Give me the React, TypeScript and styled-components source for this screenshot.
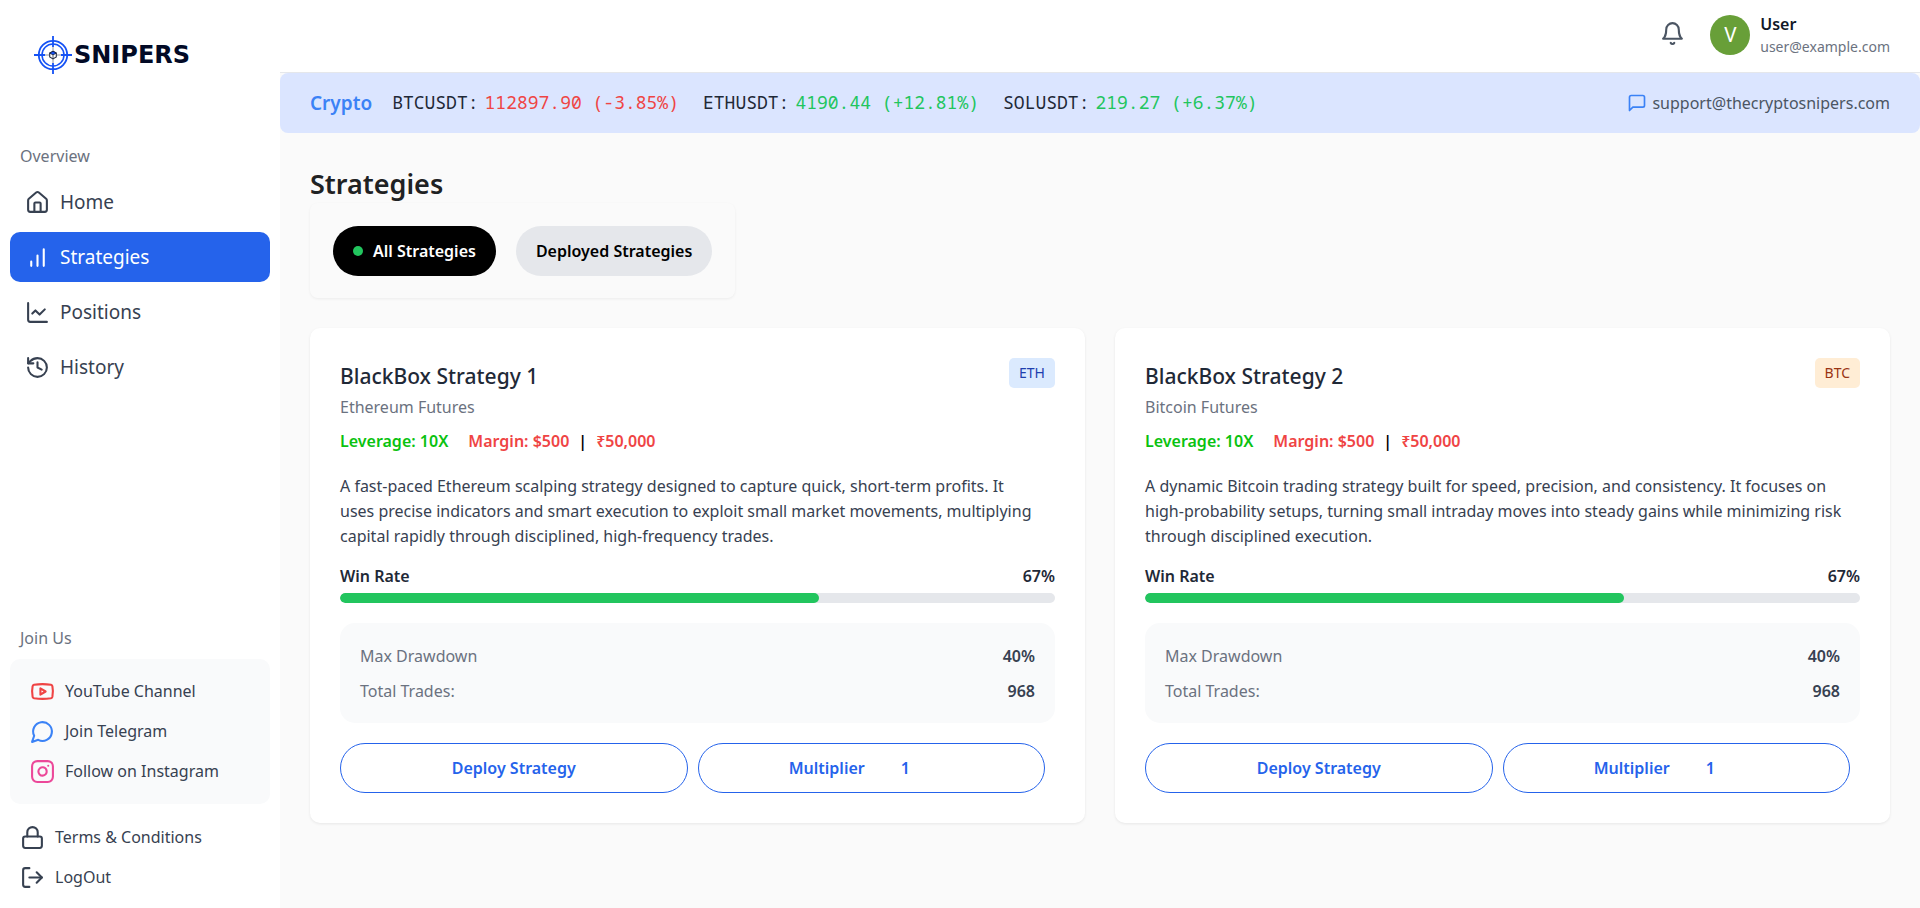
import React, { useState } from "react";
import styled, { createGlobalStyle, css } from "styled-components";
import { ChartLine, History, House, Instagram, Lock, LogOut, Youtube } from "lucide-react";

const GlobalStyle = createGlobalStyle`
  *, *::before, *::after { box-sizing: border-box; }
  body {
    margin: 0;
    background: #fafafa;
    color: #1f2937;
    font: 400 16px/25px "Noto Sans", "Open Sans", sans-serif;
  }
  h1, h2, p, ul, dl, dd { margin: 0; padding: 0; }
  ul { list-style: none; }
  a { color: inherit; text-decoration: none; }
  button, select { font: inherit; cursor: pointer; }
  svg { display: block; flex: none; }
`;

const Shell = styled.div`
  display: grid;
  grid-template-columns: 280px minmax(0, 1fr);
  min-height: 100vh;
`;

const Sidebar = styled.aside`
  display: flex;
  flex-direction: column;
  justify-content: space-between;
  background: #fff;
  padding: 33px 10px 18px;
`;

const Brand = styled.a`
  display: flex;
  align-items: center;
  padding-left: 22px;
  color: #020a26;
  font: 700 24px/44px "DejaVu Sans", "Noto Sans", sans-serif;
`;

const SectionLabel = styled.p<{ $spaced?: boolean }>`
  padding-left: 10px;
  color: #6b7280;
  margin: ${(p) => (p.$spaced ? "67px 0 8px" : "0 0 8px")};
`;

const NavList = styled.ul`
  display: grid;
  gap: 5px;
`;

const NavLink = styled.a<{ $active?: boolean }>`
  display: flex;
  align-items: center;
  gap: 10px;
  height: 50px;
  padding: 0 15px;
  border-radius: 10px;
  font-size: 19px;
  color: ${(p) => (p.$active ? "#fff" : "#374151")};
  background: ${(p) => (p.$active ? "#2563eb" : "transparent")};
`;

const SocialList = styled.ul`
  display: grid;
  gap: 15px;
  padding: 20px;
  margin-bottom: 21px;
  border-radius: 10px;
  background: #f9fafb;
`;

const FooterList = styled.ul`
  display: grid;
  gap: 15px;
  padding-left: 10px;
`;

const IconLink = styled.a<{ $tint?: string }>`
  display: flex;
  align-items: center;
  gap: 10px;
  color: #374151;
  svg { color: ${(p) => p.$tint ?? "inherit"}; }
`;

const Content = styled.div`
  display: flex;
  flex-direction: column;
`;

const TopBar = styled.header`
  display: flex;
  align-items: center;
  justify-content: flex-end;
  gap: 25px;
  height: 73px;
  padding: 0 30px 2px;
  background: #fff;
  border-bottom: 1px solid #e5e7eb;
`;

const BellButton = styled.button`
  border: 0;
  padding: 0 0 3px;
  background: none;
  color: #4b5563;
`;

const Account = styled.div`
  display: flex;
  align-items: center;
  gap: 10px;
`;

const Avatar = styled.span`
  display: grid;
  place-items: center;
  width: 40px;
  height: 40px;
  border-radius: 50%;
  background: #689f38;
  color: #fff;
  font: 400 20px/40px Roboto, sans-serif;
`;

const AccountName = styled.p`
  color: #111827;
  font-weight: 600;
  line-height: 23px;
`;

const AccountEmail = styled.p`
  color: #6b7280;
  font-size: 14px;
  line-height: 21px;
`;

const TickerBar = styled.section`
  display: flex;
  align-items: center;
  justify-content: space-between;
  height: 60px;
  padding: 0 30px;
  border-radius: 8px;
  background: #dbe5ff;
`;

const Quotes = styled.div`
  display: flex;
  align-items: center;
  gap: 24px;
`;

const Market = styled.span`
  margin-right: -4px;
  color: #3b82f6;
  font-size: 19px;
  font-weight: 600;
`;

const Quote = styled.span<{ $up: boolean }>`
  display: flex;
  gap: 6px;
  padding-bottom: 2px;
  color: #1f2937;
  font: 400 18px/25px "Noto Sans Mono", "DejaVu Sans Mono", monospace;
  b { font-weight: 400; color: ${(p) => (p.$up ? "#22c55e" : "#ef4444")}; }
`;

const Support = styled.a`
  display: flex;
  align-items: center;
  gap: 5px;
  color: #4b5563;
  svg { color: #3b82f6; }
`;

const Main = styled.main`
  padding: 32px 30px 30px;
`;

const PageTitle = styled.h1`
  color: #1f2223;
  font-size: 27px;
  font-weight: 600;
  line-height: 38px;
`;

const Filters = styled.div`
  display: flex;
  gap: 20px;
  width: fit-content;
  padding: 23px 23px 22px;
  margin-bottom: 30px;
  border-radius: 8px;
  box-shadow: 0 1px 3px rgba(0, 0, 0, 0.06);
`;

const pill = css`
  display: flex;
  align-items: center;
  justify-content: center;
  height: 50px;
  padding: 0;
  border-radius: 25px;
  font-weight: 600;
`;

const FilterButton = styled.button<{ $active: boolean }>`
  ${pill}
  gap: 10px;
  padding: 0 20px;
  border: 0;
  background: ${(p) => (p.$active ? "#000" : "#e5e7eb")};
  color: ${(p) => (p.$active ? "#fff" : "#000")};
`;

const ActiveDot = styled.span`
  width: 10px;
  height: 10px;
  border-radius: 50%;
  background: #22c55e;
`;

const CardGrid = styled.div`
  display: grid;
  grid-template-columns: repeat(auto-fit, minmax(480px, 1fr));
  gap: 30px;
`;

const Card = styled.article`
  padding: 30px;
  border-radius: 10px;
  background: #fff;
  box-shadow: 0 1px 3px rgba(0, 0, 0, 0.08);
`;

const CardHead = styled.header`
  display: flex;
  justify-content: space-between;
  align-items: flex-start;
  margin-bottom: 9px;
`;

const CardTitle = styled.h2`
  font-size: 21px;
  font-weight: 500;
  line-height: 37px;
`;

const MarketName = styled.p`
  color: #6b7280;
`;

const Badge = styled.span<{ $tone: "blue" | "orange" }>`
  padding: 0 10px;
  border-radius: 5px;
  font-size: 14px;
  line-height: 30px;
  color: ${(p) => (p.$tone === "blue" ? "#1e40af" : "#9a3412")};
  background: ${(p) => (p.$tone === "blue" ? "#dbeafe" : "#ffedd5")};
`;

const Terms = styled.p`
  display: flex;
  font-weight: 600;
  color: #000;
`;

const Leverage = styled.span`
  margin-right: 20px;
  color: #0ac210;
`;

const Amount = styled.span`
  color: #ef4444;
`;

const Divider = styled.span`
  margin: 0 9px;
`;

const Description = styled.p`
  margin: 20px 0 15px;
  color: #374151;
`;

const WinRate = styled.div`
  display: flex;
  justify-content: space-between;
  margin-bottom: 4px;
  font-weight: 600;
`;

const Track = styled.div`
  height: 10px;
  border-radius: 5px;
  background: #e5e7eb;
  overflow: hidden;
`;

const Fill = styled.div`
  height: 100%;
  border-radius: 5px;
  background: #22c55e;
`;

const Stats = styled.dl`
  display: grid;
  gap: 10px;
  margin: 20px 0;
  padding: 21px 20px 19px;
  border-radius: 15px;
  background: #f9fafb;
`;

const Stat = styled.div`
  display: flex;
  justify-content: space-between;
  color: #6b7280;
  dd { color: #374151; font-weight: 600; }
`;

const Actions = styled.div`
  display: flex;
  gap: 10px;
  padding-right: 10px;
`;

const DeployButton = styled.button`
  ${pill}
  flex: 1 1 0;
  border: 1px solid #2563eb;
  background: #fff;
  color: #2563eb;
`;

const Multiplier = styled.label`
  ${pill}
  flex: 1 1 0;
  gap: 16px;
  border: 1px solid #2563eb;
  color: #2563eb;
`;

const MultiplierSelect = styled.select`
  appearance: none;
  width: 73px;
  padding: 0 20px;
  border: 0;
  background: transparent;
  color: inherit;
  font-weight: 600;
  outline: 0;
`;

const stroke = {
  viewBox: "0 0 24 24",
  fill: "none",
  stroke: "currentColor",
  strokeWidth: 2,
  strokeLinecap: "round" as const,
  strokeLinejoin: "round" as const,
  "aria-hidden": true,
};

const BarsIcon = () => (
  <svg {...stroke} width={25} height={25}>
    <path d="M12 20V10M18 20V4M6 20v-4" />
  </svg>
);

const BellIcon = () => (
  <svg {...stroke} width={25} height={25}>
    <path d="M6 8a6 6 0 0 1 12 0c0 7 3 9 3 9H3s3-2 3-9" />
    <path d="M10.3 21a1.94 1.94 0 0 0 3.4 0" />
  </svg>
);

const MessageIcon = () => (
  <svg {...stroke} width={20} height={20}>
    <path d="M21 15a2 2 0 0 1-2 2H7l-4 4V5a2 2 0 0 1 2-2h14a2 2 0 0 1 2 2z" />
  </svg>
);

const ChatIcon = () => (
  <svg {...stroke} width={25} height={25}>
    <path d="M7.9 20A9 9 0 1 0 4 16.1L2 22Z" />
  </svg>
);

const CrosshairLogo = () => (
  <svg width={42} height={42} viewBox="0 0 42 42" fill="none" aria-hidden>
    <g stroke="#1552f5">
      <circle cx="21" cy="21" r="14.2" strokeWidth="1.8" />
      <circle cx="21" cy="21" r="11" strokeWidth="1.5" />
      <path d="M21 2v11M21 29v11M2 21h11M29 21h11" strokeWidth="1.8" />
    </g>
    <path d="M13 21h16M21 13v16" stroke="#737983" strokeWidth="0.8" />
    <path d="M21 17.3l3.3 1.8v3.8L21 24.9l-3.3-2v-3.8z" fill="#fff" stroke="#273044" strokeWidth="1.1" />
    <path d="M17.7 19.1l3.3-1.8 3.3 1.8-3.3 1.8z" fill="#1552f5" stroke="#111a35" strokeWidth="0.8" />
    <path d="M21 21v3.8" stroke="#273044" strokeWidth="0.8" />
  </svg>
);

const navItems = [
  { label: "Home", icon: <House size={25} /> },
  { label: "Strategies", icon: <BarsIcon />, active: true },
  { label: "Positions", icon: <ChartLine size={25} /> },
  { label: "History", icon: <History size={25} /> },
];

const socials = [
  { label: "YouTube Channel", icon: <Youtube size={25} />, tint: "#ef4444" },
  { label: "Join Telegram", icon: <ChatIcon />, tint: "#3b82f6" },
  { label: "Follow on Instagram", icon: <Instagram size={25} />, tint: "#ec4899" },
];

const quotes = [
  { symbol: "BTCUSDT", price: "112897.90", change: "-3.85%", up: false },
  { symbol: "ETHUSDT", price: "4190.44", change: "+12.81%", up: true },
  { symbol: "SOLUSDT", price: "219.27", change: "+6.37%", up: true },
];

type Strategy = {
  name: string;
  market: string;
  coin: string;
  tone: "blue" | "orange";
  description: string;
  winRate: number;
};

const strategies: Strategy[] = [
  {
    name: "BlackBox Strategy 1",
    market: "Ethereum Futures",
    coin: "ETH",
    tone: "blue",
    description:
      "A fast-paced Ethereum scalping strategy designed to capture quick, short-term profits. It uses\u00a0precise indicators and smart execution to exploit small market movements, multiplying capital rapidly through disciplined, high-frequency trades.",
    winRate: 67,
  },
  {
    name: "BlackBox Strategy 2",
    market: "Bitcoin Futures",
    coin: "BTC",
    tone: "orange",
    description:
      "A dynamic Bitcoin trading strategy built for speed, precision, and consistency. It focuses on high-probability setups, turning small intraday moves into steady gains while minimizing risk through disciplined execution.",
    winRate: 67,
  },
];

function StrategyCard({ strategy: s }: { strategy: Strategy }) {
  const [multiplier, setMultiplier] = useState("1");
  return (
    <Card>
      <CardHead>
        <div>
          <CardTitle>{s.name}</CardTitle>
          <MarketName>{s.market}</MarketName>
        </div>
        <Badge $tone={s.tone}>{s.coin}</Badge>
      </CardHead>
      <Terms>
        <Leverage>Leverage: 10X</Leverage>
        <Amount>Margin: $500</Amount>
        <Divider>|</Divider>
        <Amount>₹50,000</Amount>
      </Terms>
      <Description>{s.description}</Description>
      <WinRate>
        <span>Win Rate</span>
        <span>{s.winRate}%</span>
      </WinRate>
      <Track>
        <Fill style={{ width: `${s.winRate}%` }} />
      </Track>
      <Stats>
        <Stat>
          <dt>Max Drawdown</dt>
          <dd>40%</dd>
        </Stat>
        <Stat>
          <dt>Total Trades:</dt>
          <dd>968</dd>
        </Stat>
      </Stats>
      <Actions>
        <DeployButton type="button">Deploy Strategy</DeployButton>
        <Multiplier>
          Multiplier
          <MultiplierSelect value={multiplier} onChange={(e) => setMultiplier(e.target.value)}>
            {["1", "2", "3", "4", "5"].map((n) => (
              <option key={n}>{n}</option>
            ))}
          </MultiplierSelect>
        </Multiplier>
      </Actions>
    </Card>
  );
}

export default function App() {
  const [filter, setFilter] = useState("All Strategies");
  return (
    <>
      <GlobalStyle />
      <Shell>
        <Sidebar>
          <div>
            <Brand href="#">
              <CrosshairLogo />
              SNIPERS
            </Brand>
            <SectionLabel $spaced>Overview</SectionLabel>
            <nav>
              <NavList>
                {navItems.map((n) => (
                  <li key={n.label}>
                    <NavLink href="#" $active={n.active}>
                      {n.icon}
                      {n.label}
                    </NavLink>
                  </li>
                ))}
              </NavList>
            </nav>
          </div>
          <div>
            <SectionLabel>Join Us</SectionLabel>
            <SocialList>
              {socials.map((s) => (
                <li key={s.label}>
                  <IconLink href="#" $tint={s.tint}>
                    {s.icon}
                    {s.label}
                  </IconLink>
                </li>
              ))}
            </SocialList>
            <FooterList>
              <li>
                <IconLink href="#">
                  <Lock size={25} />
                  Terms &amp; Conditions
                </IconLink>
              </li>
              <li>
                <IconLink href="#">
                  <LogOut size={25} />
                  LogOut
                </IconLink>
              </li>
            </FooterList>
          </div>
        </Sidebar>
        <Content>
          <TopBar>
            <BellButton type="button" aria-label="Notifications">
              <BellIcon />
            </BellButton>
            <Account>
              <Avatar>V</Avatar>
              <div>
                <AccountName>User</AccountName>
                <AccountEmail>user@example.com</AccountEmail>
              </div>
            </Account>
          </TopBar>
          <TickerBar>
            <Quotes>
              <Market>Crypto</Market>
              {quotes.map((q) => (
                <Quote key={q.symbol} $up={q.up}>
                  {q.symbol}:
                  <b>
                    {q.price} ({q.change})
                  </b>
                </Quote>
              ))}
            </Quotes>
            <Support href="mailto:support@thecryptosnipers.com">
              <MessageIcon />
              support@thecryptosnipers.com
            </Support>
          </TickerBar>
          <Main>
            <PageTitle>Strategies</PageTitle>
            <Filters>
              {["All Strategies", "Deployed Strategies"].map((f) => (
                <FilterButton key={f} type="button" $active={f === filter} onClick={() => setFilter(f)}>
                  {f === filter && <ActiveDot />}
                  {f}
                </FilterButton>
              ))}
            </Filters>
            <CardGrid>
              {strategies.map((s) => (
                <StrategyCard key={s.name} strategy={s} />
              ))}
            </CardGrid>
          </Main>
        </Content>
      </Shell>
    </>
  );
}
